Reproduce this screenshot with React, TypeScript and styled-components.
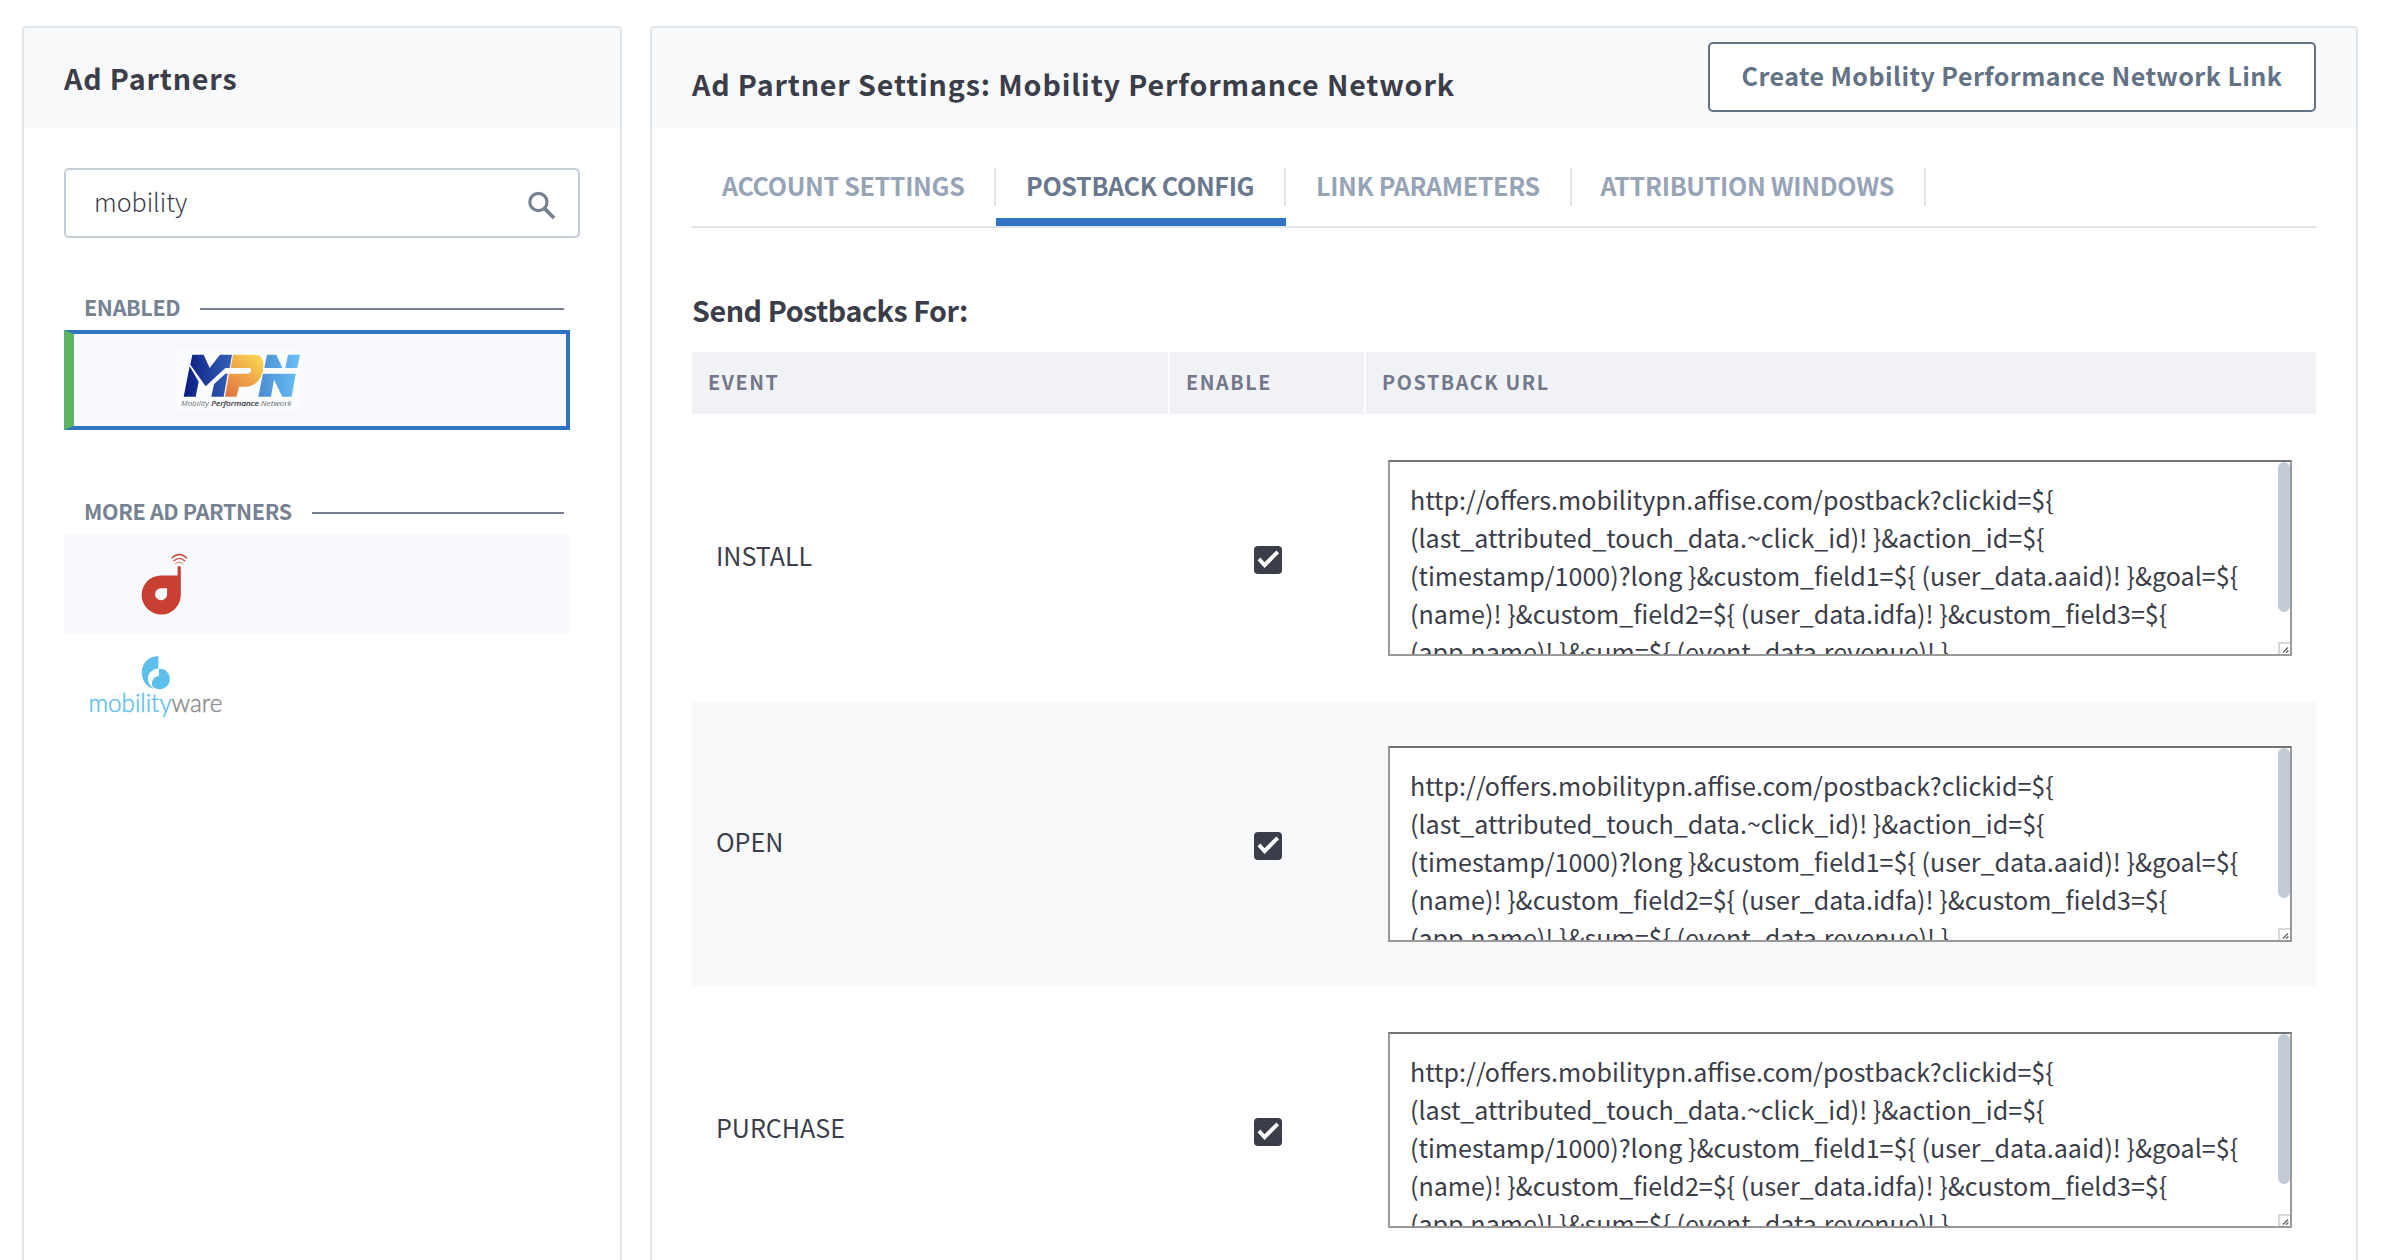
import React from 'react';
import styled, { createGlobalStyle } from 'styled-components';

const GlobalStyle = createGlobalStyle`
  *, *::before, *::after { box-sizing: border-box; }
  html, body { margin: 0; padding: 0; height: 100%; overflow: hidden; background: #fff; }
  body {
    font-family: 'Noto Sans CJK SC', 'Noto Sans', sans-serif;
    color: #3b3d49;
    font-size: 25.07px;
  }
  h1, h2, h3, p { margin: 0; font-weight: inherit; font-size: inherit; }
  button, input { font-family: inherit; }
`;

const Page = styled.main`
  display: flex;
  align-items: flex-start;
  gap: 28px;
  height: 1260px;
  padding: 26px 26px 0 22px;
  overflow: hidden;
`;

const Card = styled.section<{ $width?: number }>`
  flex: ${(p) => (p.$width ? `0 0 ${p.$width}px` : '1 1 0')};
  height: 1300px;
  border: 2px solid #e0e5ea;
  border-radius: 4px;
  background: #fff;
  overflow: hidden;
`;

const CardHeader = styled.header`
  display: flex;
  align-items: center;
  justify-content: space-between;
  height: 100px;
  padding: 0 40px;
  background: #f8f9fb;
`;

const Heading = styled.h1<{ $drop?: number }>`
  padding-top: ${(p) => p.$drop ?? 0}px;
  font-size: 28.65px;
  line-height: 40px;
  font-weight: 700;
  letter-spacing: 0.85px;
  white-space: nowrap;
`;

const CreateButton = styled.button`
  width: 608px;
  height: 70px;
  margin-bottom: 2px;
  padding: 0 0 4px;
  border: 2px solid #647285;
  border-radius: 5px;
  background: #fff;
  color: #647285;
  font-size: 25.07px;
  font-weight: 700;
  letter-spacing: 0.43px;
  white-space: nowrap;
`;

const SearchBox = styled.label`
  display: flex;
  align-items: center;
  justify-content: space-between;
  width: 516px;
  height: 70px;
  margin: 40px 0 0 40px;
  padding: 0 22px 0 28px;
  border: 2px solid #c3cdd8;
  border-radius: 5px;
`;

const SearchInput = styled.input`
  width: 380px;
  height: 60px;
  padding: 0 0 4px;
  border: 0;
  outline: 0;
  background: transparent;
  color: #3b3d49;
  font-size: 25.07px;
  font-weight: 300;
`;

const SearchGlyph = styled.svg`
  display: block;
  margin-top: 5px;
`;

const PartnerGroup = styled.section<{ $top: number }>`
  width: 506px;
  margin: ${(p) => p.$top}px 0 0 40px;
`;

const GroupTitle = styled.h2`
  display: flex;
  align-items: center;
  gap: 20px;
  height: 42px;
  padding: 0 6px 0 20px;
  color: #768292;
  font-size: 21.5px;
  font-weight: 700;
  line-height: 30px;
  letter-spacing: -0.35px;
  white-space: nowrap;

  span { padding-bottom: 4px; }
  &::after {
    content: '';
    flex: 1;
    height: 2px;
    background: #768292;
  }
`;

const PartnerRow = styled.div<{ $selected?: boolean; $shaded?: boolean; $indent: number; $drop?: number }>`
  display: flex;
  align-items: center;
  height: 100px;
  padding-top: ${(p) => p.$drop ?? 0}px;
  padding-left: ${(p) => p.$indent}px;
  background: ${(p) => (p.$shaded ? '#f8f9fd' : '#fff')};
  border: solid #2f74c0;
  border-width: ${(p) => (p.$selected ? '4px 4px 4px 10px' : '0')};
  border-left-color: #5ab462;
`;

const CardBody = styled.div`
  padding: 40px 40px 0;
`;

const Tabs = styled.nav`
  display: flex;
  border-bottom: 2px solid #e0e5ea;
`;

const Tab = styled.div<{ $active?: boolean; $width: number }>`
  width: ${(p) => p.$width}px;
  padding-bottom: 12px;
  border-bottom: 8px solid ${(p) => (p.$active ? '#3174c3' : 'transparent')};
  color: ${(p) => (p.$active ? '#68788e' : '#97a4b7')};
`;

const TabLabel = styled.div<{ $pad?: number }>`
  height: 38px;
  padding-left: ${(p) => p.$pad ?? 30}px;
  border-right: 2px solid #e0e5ea;
  font-weight: 700;
  line-height: 34px;
  letter-spacing: -0.34px;
  white-space: nowrap;
`;

const Subheading = styled.h2`
  margin-top: 62px;
  font-size: 28.65px;
  font-weight: 600;
  line-height: 40px;
  height: 62px;
  letter-spacing: -0.42px;
`;

const TableRow = styled.div`
  display: grid;
  grid-template-columns: 476px 194px 1fr;
  column-gap: 2px;
`;

const HeadCell = styled.div`
  height: 62px;
  padding-left: 16px;
  background: #f1f2f6;
  color: #74788b;
  font-size: 19.7px;
  font-weight: 700;
  line-height: 59px;
  letter-spacing: 1.6px;
`;

const EventRow = styled(TableRow)<{ $shaded?: boolean }>`
  height: 284px;
  margin-top: 2px;
  align-items: center;
  background: ${(p) => (p.$shaded ? '#f8f9fb' : '#fff')};
`;

const EventName = styled.div`
  padding: 0 0 6px 24px;
  line-height: 38px;
`;

const CheckCell = styled.div`
  display: flex;
  padding: 4px 0 0 84px;
`;

const UrlBox = styled.div`
  display: flex;
  justify-content: space-between;
  width: 904px;
  height: 196px;
  margin-left: 22px;
  border: 2px solid #999;
  border-top-color: #737373;
  background: #fff;
  overflow: hidden;
`;

const UrlText = styled.p`
  padding: 18px 0 0 20px;
  line-height: 38px;
  white-space: pre;
`;

const ScrollTrack = styled.div`
  display: flex;
  flex-direction: column;
  justify-content: space-between;
  width: 12px;
`;

const ScrollThumb = styled.div`
  height: 150px;
  border-radius: 6px;
  background: #c3cbd6;
`;

const ResizeCorner = styled.svg`
  display: block;
  width: 12px;
  height: 12px;
`;

const SearchIcon = () => (
  <SearchGlyph width="29" height="29" viewBox="0 0 29 29" fill="none" stroke="#768292">
    <circle cx="11.4" cy="11" r="8.6" strokeWidth="3.2" />
    <path d="M17.2 17.2 27 27" strokeWidth="3.8" />
  </SearchGlyph>
);

const MpnLogo = () => (
  <svg width="124" height="61" viewBox="50 28 372 183">
    <defs>
      <linearGradient id="mpnBlue" x1="70" y1="0" x2="215" y2="0" gradientUnits="userSpaceOnUse">
        <stop offset="0" stopColor="#0b1a80" />
        <stop offset="1" stopColor="#3262b8" />
      </linearGradient>
      <linearGradient id="mpnOrange" x1="200" y1="165" x2="290" y2="55" gradientUnits="userSpaceOnUse">
        <stop offset="0" stopColor="#e27144" />
        <stop offset="1" stopColor="#f8ce4e" />
      </linearGradient>
      <linearGradient id="mpnSky" x1="295" y1="0" x2="415" y2="0" gradientUnits="userSpaceOnUse">
        <stop offset="0" stopColor="#4a8bd3" />
        <stop offset="1" stopColor="#69bff5" />
      </linearGradient>
    </defs>
    <rect x="50" y="28" width="372" height="183" fill="#fbfcfe" />
    <path fill="url(#mpnBlue)" d="M96 42H130L148 82 179 42H215L208 82H195L136 137 90 72ZM88 77 115 123 106 168H70ZM202 99 190 168H153L161 131 195 99Z" />
    <path fill="url(#mpnOrange)" d="M218 42H280C303 42 311 56 309 78 307 112 288 138 254 138H236L229 168H194L206 99H257C266 99 272 95 272 88 272 84 270 82 266 82H211Z" />
    <path fill="url(#mpnSky)" d="M320 42H348L366 82H312ZM383 42H419L411 82H375ZM308 99H406L394 168H366L341 117 332 168H294Z" />
    <g fontFamily="'Open Sans', sans-serif" fontStyle="italic" fontSize="21.5" fill="#6d6f75">
      <text x="62" y="196" textLength="84" lengthAdjust="spacingAndGlyphs">Mobility</text>
      <text x="153" y="196" textLength="142" lengthAdjust="spacingAndGlyphs" fill="#303136" stroke="#303136" strokeWidth="0.6">Performance</text>
      <text x="301" y="196" textLength="93" lengthAdjust="spacingAndGlyphs">Network</text>
    </g>
  </svg>
);

const SignalLogo = () => (
  <svg width="48" height="62" viewBox="140 553 48 62">
    <path
      fill="#c74032"
      fillRule="evenodd"
      d="M177.6 575.4V567.6A1.6 1.6 0 0 1 180.8 567.6V594.5A19.6 19.6 0 1 1 161 575.4ZM167.1 588.3H161A6 6 0 1 0 167.1 594.3Z"
    />
    <g fill="none" stroke="#c74032">
      <path d="M171.6 558.4Q179.3 550.6 187 558.4" strokeWidth="1.3" />
      <path d="M173.4 561.2Q179.3 555.6 185.2 561.2" strokeWidth="1.2" opacity="0.9" />
      <path d="M175.2 563.9Q179.3 560.4 183.4 563.9" strokeWidth="1" opacity="0.7" />
    </g>
  </svg>
);

const MobilityWareLogo = () => (
  <svg width="136" height="64" viewBox="88 655 136 64">
    <g fill="#5dbfeb">
      <path d="M158.4 656C148.6 656.2 141.8 663 141.8 672.4 141.8 680.6 146.6 687 154 688.8 149.8 685.8 147.9 682.4 148 678.4 148.2 672.6 152.6 669 158.4 668.6Z" />
      <path d="M158.9 668.7A10.3 10.3 0 1 1 152.6 686.6C151.4 683.6 151.8 681 153.6 678.8 155 677.2 156.8 676.3 158.9 676Z" />
    </g>
    <text
      x="88.4"
      y="711.6"
      textLength="134"
      lengthAdjust="spacingAndGlyphs"
      fontFamily="Lato, sans-serif"
      fontWeight="300"
      fontSize="24.5"
      strokeWidth="0.45"
    >
      <tspan fill="#5dbfeb" stroke="#5dbfeb">mobility</tspan>
      <tspan fill="#8b8b8b" stroke="#8b8b8b">ware</tspan>
    </text>
  </svg>
);

const Checkbox = () => (
  <svg width="28" height="28" viewBox="0 0 28 28" role="checkbox" aria-checked="true">
    <rect width="28" height="28" rx="4" fill="#3b3d49" />
    <path d="M3.5 14.3 6.4 11.5 10.5 16.2 22.4 4.4 25.1 7.2 10.6 21.9Z" fill="#fff" />
  </svg>
);

const POSTBACK_URL = [
  'http://offers.mobilitypn.affise.com/postback?clickid=${',
  '(last_attributed_touch_data.~click_id)! }&action_id=${',
  '(timestamp/1000)?long }&custom_field1=${ (user_data.aaid)! }&goal=${',
  '(name)! }&custom_field2=${ (user_data.idfa)! }&custom_field3=${',
  '(app.name)! }&sum=${ (event_data.revenue)! }',
].join('\n');

const TABS = [
  { label: 'ACCOUNT SETTINGS', width: 304 },
  { label: 'POSTBACK CONFIG', width: 290, active: true },
  { label: 'LINK PARAMETERS', width: 286 },
  { label: 'ATTRIBUTION WINDOWS', width: 354, pad: 28.5 },
];

const EVENTS = ['INSTALL', 'OPEN', 'PURCHASE'];

export default function App() {
  return (
    <>
      <GlobalStyle />
      <Page>
        <Card $width={600}>
          <CardHeader>
            <Heading>Ad Partners</Heading>
          </CardHeader>
          <SearchBox>
            <SearchInput defaultValue="mobility" />
            <SearchIcon />
          </SearchBox>
          <PartnerGroup $top={50}>
            <GroupTitle><span>ENABLED</span></GroupTitle>
            <PartnerRow $selected $shaded $indent={103}>
              <MpnLogo />
            </PartnerRow>
          </PartnerGroup>
          <PartnerGroup $top={62}>
            <GroupTitle><span>MORE AD PARTNERS</span></GroupTitle>
            <PartnerRow $shaded $indent={76}>
              <SignalLogo />
            </PartnerRow>
            <PartnerRow $indent={24} $drop={6}>
              <MobilityWareLogo />
            </PartnerRow>
          </PartnerGroup>
        </Card>
        <Card>
          <CardHeader>
            <Heading $drop={11}>Ad Partner Settings: Mobility Performance Network</Heading>
            <CreateButton>Create Mobility Performance Network Link</CreateButton>
          </CardHeader>
          <CardBody>
            <Tabs>
              {TABS.map((tab) => (
                <Tab key={tab.label} $active={tab.active} $width={tab.width}>
                  <TabLabel $pad={tab.pad}>{tab.label}</TabLabel>
                </Tab>
              ))}
            </Tabs>
            <Subheading>Send Postbacks For:</Subheading>
            <TableRow>
              <HeadCell>EVENT</HeadCell>
              <HeadCell>ENABLE</HeadCell>
              <HeadCell>POSTBACK URL</HeadCell>
            </TableRow>
            {EVENTS.map((name, i) => (
              <EventRow key={name} $shaded={i % 2 === 1}>
                <EventName>{name}</EventName>
                <CheckCell><Checkbox /></CheckCell>
                <UrlBox>
                  <UrlText>{POSTBACK_URL}</UrlText>
                  <ScrollTrack>
                    <ScrollThumb />
                    <ResizeCorner viewBox="0 0 12 12">
                      <path d="M12 1H1V12" fill="#fff" stroke="#d9d9d9" strokeWidth="2" />
                      <path d="M5 10.5 10 5.5M8 10.8 10.4 8.4" stroke="#666" strokeWidth="1.4" />
                    </ResizeCorner>
                  </ScrollTrack>
                </UrlBox>
              </EventRow>
            ))}
          </CardBody>
        </Card>
      </Page>
    </>
  );
}
